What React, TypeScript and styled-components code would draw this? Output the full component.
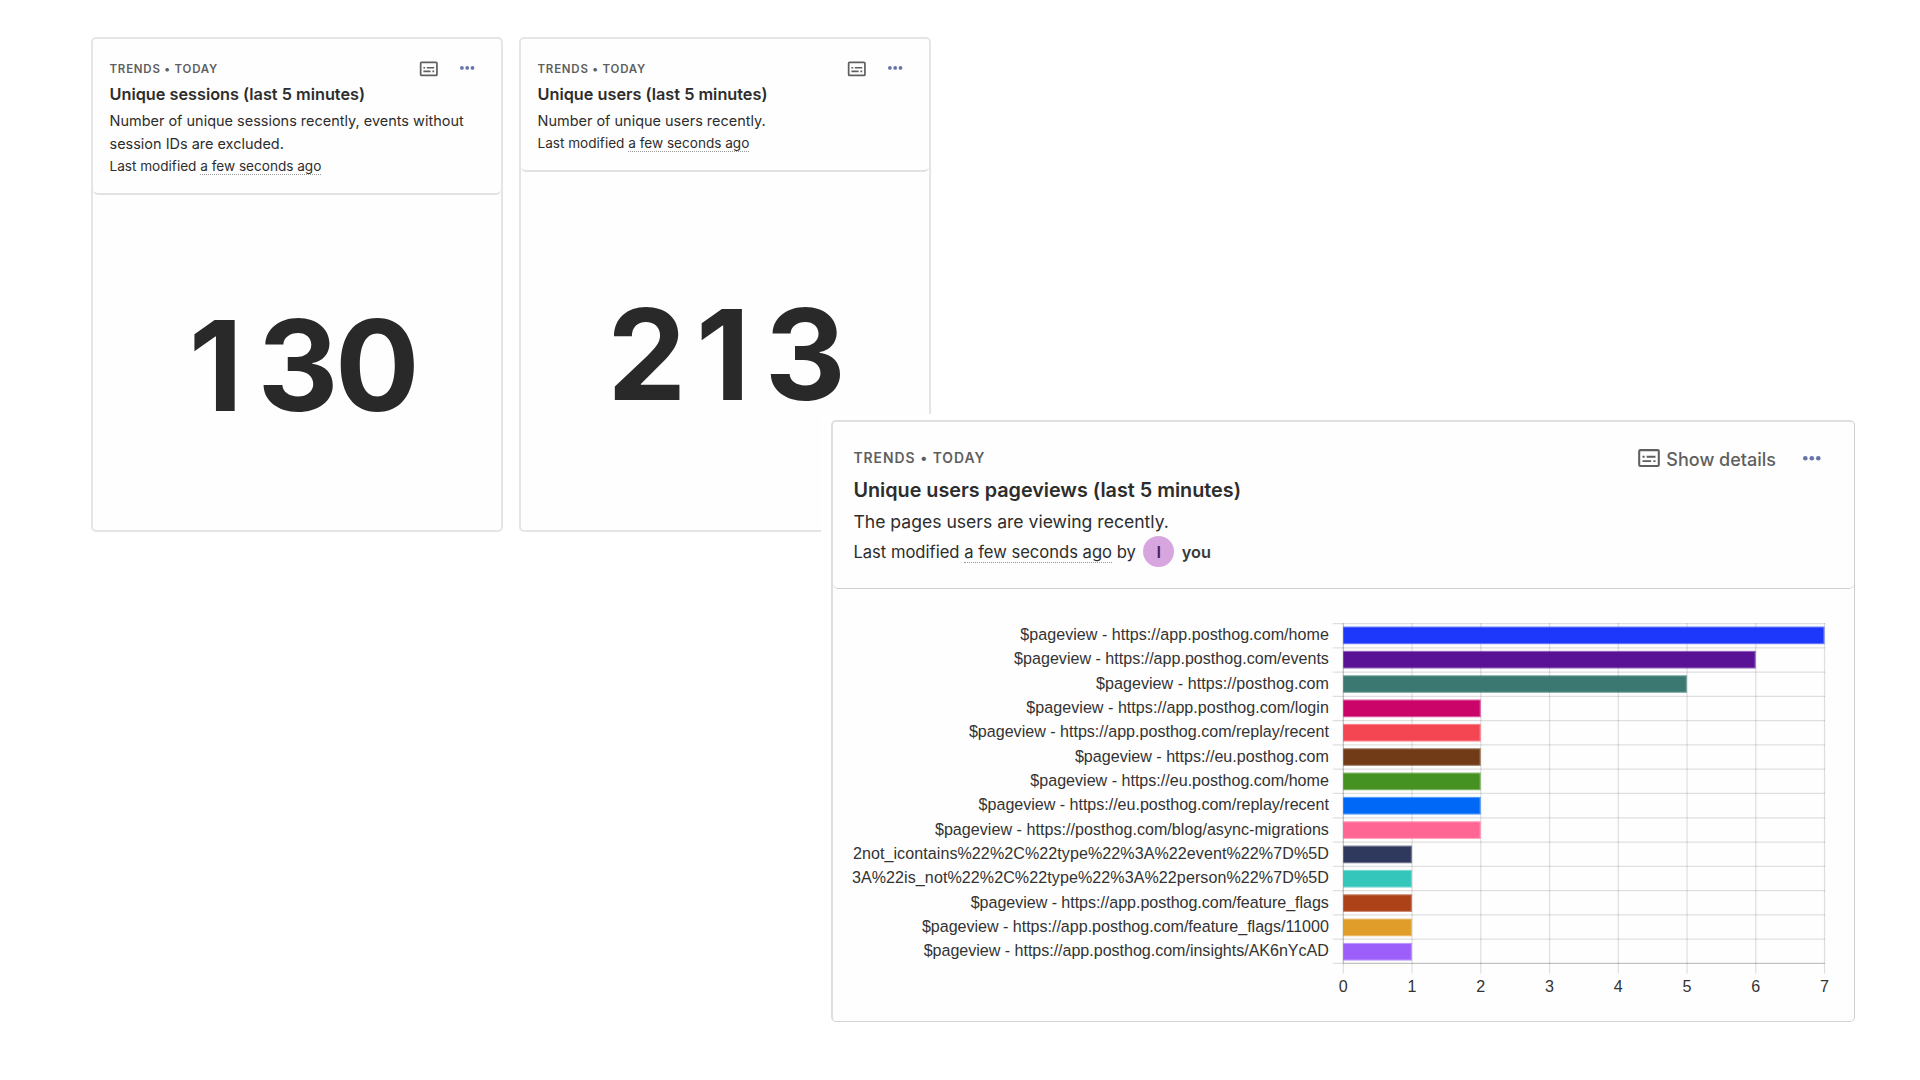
import React from 'react';
import styled, { createGlobalStyle } from 'styled-components';

const GlobalStyle = createGlobalStyle`
  *, *::before, *::after { box-sizing: border-box; }
  html, body { margin: 0; background: #fff; }
  body { font-family: Inter, "Liberation Sans", sans-serif; color: #2d2d2d; overflow: hidden; }
`;

type Size = 'small' | 'large';

const Page = styled.main`
  width: 1920px;
  height: 1080px;
  overflow: hidden;
  background: #fff;
`;

const MetricRow = styled.section`
  display: flex;
  gap: 16px;
  padding: 37px 0 0 91px;
`;

const Backdrop = styled.section`
  position: relative;
  width: 1044px;
  margin: -118px 0 0 821px;
  padding: 6px 10px 10px;
  background: #fff;
`;

const MetricCard = styled.article`
  display: flex;
  flex-direction: column;
  width: 412px;
  height: 495px;
  border: 2px solid #e5e5e5;
  border-radius: 5px;
  background: #fefefe;
`;

const ChartCard = styled.article`
  display: flex;
  flex-direction: column;
  width: 1024px;
  height: 602px;
  border-style: solid;
  border-width: 2px 1px 1px 2px;
  border-color: #dfdfdf #cfcfcf #d3d3d3 #dedede;
  border-radius: 5px;
  background: #fefefe;
`;

const Header = styled.header<{ $size: Size }>`
  flex: none;
  padding: ${(p) => (p.$size === 'large' ? '24.3px 33.4px 20.4px 20.4px' : '19.3px 26.5px 15.8px 16.5px')};
  border-bottom: ${(p) => (p.$size === 'large' ? '1px solid #cfcfcf' : '2px solid #e1e1e1')};
  border-radius: 5px;
`;

const TopRow = styled.div<{ $size: Size }>`
  display: flex;
  align-items: center;
  justify-content: space-between;
  height: ${(p) => (p.$size === 'large' ? 24 : 20)}px;
`;

const Eyebrow = styled.div<{ $size: Size }>`
  padding-top: ${(p) => (p.$size === 'large' ? 0 : 1)}px;
  font-size: ${(p) => (p.$size === 'large' ? 13.9 : 11.5)}px;
  letter-spacing: ${(p) => (p.$size === 'large' ? 1 : 0.77)}px;
  font-weight: 600;
  color: #5f5f5f;
  white-space: nowrap;
`;

const Actions = styled.div<{ $size: Size }>`
  display: flex;
  align-items: center;
  gap: ${(p) => (p.$size === 'large' ? 27 : 20.5)}px;
`;

const DetailsButton = styled.button`
  display: flex;
  align-items: center;
  gap: 4.4px;
  padding: 0;
  border: 0;
  background: none;
  color: #5f5f5f;
`;

const ButtonText = styled.span`
  padding-top: 3px;
  font: 500 18px/24px Inter, sans-serif;
  white-space: nowrap;
`;

const MenuButton = styled.button`
  display: flex;
  padding: 0;
  border: 0;
  background: none;
  color: #6674a8;
`;

const Title = styled.h4<{ $size: Size }>`
  margin: ${(p) => (p.$size === 'large' ? 4.5 : 4)}px 0 0;
  font-size: ${(p) => (p.$size === 'large' ? 19.78 : 16.27)}px;
  line-height: ${(p) => (p.$size === 'large' ? 30 : 24)}px;
  font-weight: 600;
  white-space: nowrap;
`;

const Description = styled.p<{ $size: Size }>`
  margin: ${(p) => (p.$size === 'large' ? 2.8 : 2.6)}px 0 0;
  font-size: ${(p) => (p.$size === 'large' ? 17.58 : 14.48)}px;
  line-height: ${(p) => (p.$size === 'large' ? 28 : 23)}px;
  white-space: pre-line;
`;

const Modified = styled.div<{ $size: Size }>`
  display: flex;
  align-items: center;
  height: ${(p) => (p.$size === 'large' ? 32 : 22)}px;
  margin-top: ${(p) => (p.$size === 'large' ? 0 : 0.4)}px;
  font-size: ${(p) => (p.$size === 'large' ? 16.58 : 13.58)}px;
  line-height: ${(p) => (p.$size === 'large' ? 32 : 22)}px;
  white-space: pre;
`;

const Ago = styled.span<{ $size: Size }>`
  height: ${(p) => (p.$size === 'large' ? 22 : 18)}px;
  padding-top: 1px;
  line-height: ${(p) => (p.$size === 'large' ? 20 : 16)}px;
  border-bottom: 1px dotted #9a9a9a;
`;

const Avatar = styled.span`
  display: flex;
  align-items: center;
  justify-content: center;
  width: 31px;
  height: 31px;
  margin: 0 7.5px;
  border-radius: 50%;
  background: #d8a6df;
  color: #4c2059;
  font-size: 16.5px;
  font-weight: 600;
`;

const Author = styled.span`
  font-size: 16.3px;
  font-weight: 600;
  color: #3a3a3a;
`;

const MetricBody = styled.div`
  flex: 1;
  display: flex;
  align-items: center;
  justify-content: center;
  padding: 5px 0 0 2px;
  color: #292929;
  font-size: 125.5px;
  line-height: 150px;
  font-weight: 700;
`;

const Digit = styled.span<{ $narrow: boolean }>`
  flex: none;
  width: 79.3px;
  padding-right: ${(p) => (p.$narrow ? 6 : 0)}px;
  display: flex;
  justify-content: center;
`;

const Chart = styled.svg`
  display: block;
  flex: none;
  font-family: "Liberation Sans", Arial, sans-serif;
  font-size: 16.08px;
  fill: #333;
`;

const SubtitlesIcon = ({ size }: { size: number }) => (
  <svg width={size} height={size} viewBox="0 0 24 24" fill="none">
    <rect x="2.95" y="4.75" width="18.1" height="14.6" rx="1.1" stroke="#5f5f5f" strokeWidth="1.9" />
    <path d="M6 9.9h2v1.8H6zM9.8 9.9H18v1.8H9.8zM6 14h8v1.8H6zM16 14h2v1.8h-2z" fill="#5f5f5f" />
  </svg>
);

const DotsIcon = ({ gap, r }: { gap: number; r: number }) => {
  const w = gap * 2 + r * 2;
  return (
    <svg width={w} height={r * 2} viewBox={`0 0 ${w} ${r * 2}`} fill="currentColor">
      {[0, 1, 2].map((i) => (
        <circle key={i} cx={r + gap * i} cy={r} r={r} />
      ))}
    </svg>
  );
};

const PV = '$pageview - https://';
const DATA: { label: string; length: number; value: number; color: string }[] = [
  { label: `${PV}app.posthog.com/home`, length: 308.6, value: 7, color: '#1d38fb' },
  { label: `${PV}app.posthog.com/events`, length: 314.8, value: 6, color: '#591296' },
  { label: `${PV}posthog.com`, length: 233, value: 5, color: '#3a7871' },
  { label: `${PV}app.posthog.com/login`, length: 302.6, value: 2, color: '#ca0469' },
  { label: `${PV}app.posthog.com/replay/recent`, length: 360, value: 2, color: '#f44553' },
  { label: `${PV}eu.posthog.com`, length: 254, value: 2, color: '#713b17' },
  { label: `${PV}eu.posthog.com/home`, length: 298.6, value: 2, color: '#459121' },
  { label: `${PV}eu.posthog.com/replay/recent`, length: 350.3, value: 2, color: '#0068f7' },
  { label: `${PV}posthog.com/blog/async-migrations`, length: 394, value: 2, color: '#ff6694' },
  { label: '2not_icontains%22%2C%22type%22%3A%22event%22%7D%5D', length: 476, value: 1, color: '#2f385d' },
  { label: '3A%22is_not%22%2C%22type%22%3A%22person%22%7D%5D', length: 477, value: 1, color: '#34c5bb' },
  { label: `${PV}app.posthog.com/feature_flags`, length: 358.2, value: 1, color: '#ad4118' },
  { label: `${PV}app.posthog.com/feature_flags/11000`, length: 407, value: 1, color: '#e09d2a' },
  { label: `${PV}app.posthog.com/insights/AK6nYcAD`, length: 405.2, value: 1, color: '#9c5ffa' },
];

const LEFT = 510.3;
const TOP = 34.6;
const ROW = 24.27;
const STEP = 68.75;
const BOTTOM = TOP + ROW * 14;
const RIGHT = LEFT + STEP * 7;

const PageviewsChart = () => (
  <Chart width={1021} height={432} viewBox="0 0 1021 432">
    {Array.from({ length: 15 }, (_, i) => (
      <line key={i} x1={LEFT - 10.6} x2={RIGHT + 0.5} y1={TOP + ROW * i} y2={TOP + ROW * i} stroke="#000" strokeOpacity={0.12} strokeWidth={1.25} />
    ))}
    {Array.from({ length: 8 }, (_, i) => (
      <line key={i} x1={LEFT + STEP * i} x2={LEFT + STEP * i} y1={TOP - 0.6} y2={BOTTOM + 10.2} stroke="#000" strokeOpacity={0.12} strokeWidth={1.25} />
    ))}
    {DATA.map((d, i) => {
      const y = 37.5 + 24.34 * i;
      const w = STEP * d.value;
      return (
        <g key={i} fill={d.color}>
          <rect x={LEFT} y={y} width={w} height={17.7} fillOpacity={0.65} />
          <rect x={LEFT + 0.3} y={y + 1.1} width={w - 1.5} height={15.5} />
        </g>
      );
    })}
    <path d={`M${LEFT} ${TOP}V${BOTTOM}H${RIGHT}`} fill="none" stroke="#000" strokeOpacity={0.13} strokeWidth={1.25} />
    {DATA.map((d, i) => (
      <text key={i} x={495.9 - d.length} y={50.9 + 24.35 * i} textLength={d.length}>
        {d.label}
      </text>
    ))}
    {Array.from({ length: 8 }, (_, i) => (
      <text key={i} x={LEFT + STEP * i} y={403.4} textAnchor="middle">
        {i}
      </text>
    ))}
  </Chart>
);

const Metric = ({ title, description, value }: { title: string; description: string; value: string }) => (
  <MetricCard>
    <Header $size="small">
      <TopRow $size="small">
        <Eyebrow $size="small">TRENDS • TODAY</Eyebrow>
        <Actions $size="small">
          <DetailsButton aria-label="Show details">
            <SubtitlesIcon size={21.6} />
          </DetailsButton>
          <MenuButton aria-label="More">
            <DotsIcon gap={5.3} r={1.9} />
          </MenuButton>
        </Actions>
      </TopRow>
      <Title $size="small">{title}</Title>
      <Description $size="small">{description}</Description>
      <Modified $size="small">
        {'Last modified '}
        <Ago $size="small">a few seconds ago</Ago>
      </Modified>
    </Header>
    <MetricBody>
      {value.split('').map((digit, i) => (
        <Digit key={i} $narrow={digit === '1'}>
          {digit}
        </Digit>
      ))}
    </MetricBody>
  </MetricCard>
);

export default function App() {
  return (
    <Page>
      <GlobalStyle />
      <MetricRow>
        <Metric
          title="Unique sessions (last 5 minutes)"
          description={'Number of unique sessions recently, events without\nsession IDs are excluded.'}
          value="130"
        />
        <Metric title="Unique users (last 5 minutes)" description="Number of unique users recently." value="213" />
      </MetricRow>
      <Backdrop>
        <ChartCard>
          <Header $size="large">
            <TopRow $size="large">
              <Eyebrow $size="large">TRENDS • TODAY</Eyebrow>
              <Actions $size="large">
                <DetailsButton>
                  <SubtitlesIcon size={26} />
                  <ButtonText>Show details</ButtonText>
                </DetailsButton>
                <MenuButton aria-label="More">
                  <DotsIcon gap={6.5} r={2.3} />
                </MenuButton>
              </Actions>
            </TopRow>
            <Title $size="large">Unique users pageviews (last 5 minutes)</Title>
            <Description $size="large">The pages users are viewing recently.</Description>
            <Modified $size="large">
              {'Last modified '}
              <Ago $size="large">a few seconds ago</Ago>
              {' by'}
              <Avatar>I</Avatar>
              <Author>you</Author>
            </Modified>
          </Header>
          <PageviewsChart />
        </ChartCard>
      </Backdrop>
    </Page>
  );
}
